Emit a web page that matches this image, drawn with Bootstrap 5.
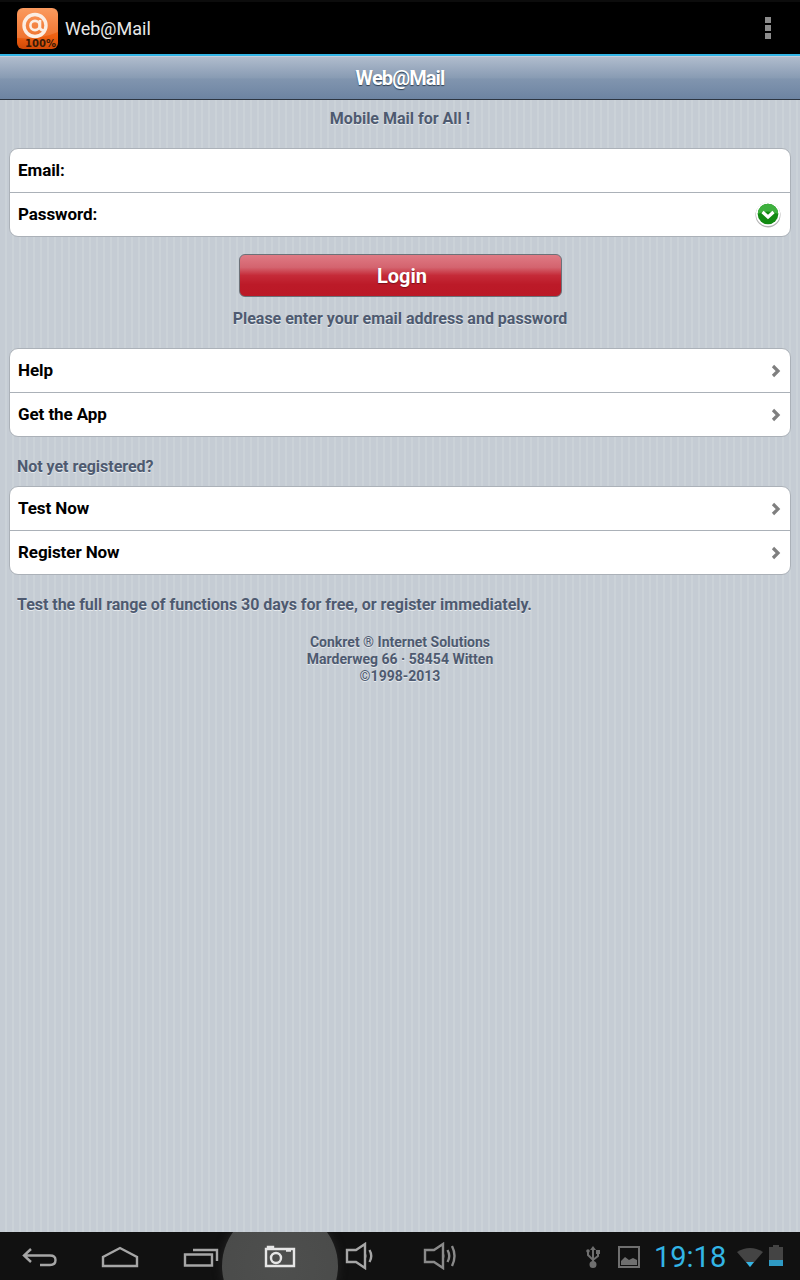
<!DOCTYPE html>
<html lang="en">
<head>
    <meta charset="UTF-8">
    <meta name="viewport" content="width=device-width, initial-scale=1.0">
    <title>Web@Mail</title>
    <link rel="stylesheet" href="https://cdn.jsdelivr.net/npm/bootstrap@5.3.0/dist/css/bootstrap.min.css">
    <style>
        html, body { height: 100%; }
        body { font-family: Roboto, "Liberation Sans", sans-serif; background: #c5ccd4; }
        .screen { height: 1280px; width: 800px; overflow: hidden; }
        .action-bar { height: 56px; background: #000; border-top: 2px solid #0c0c0c; border-bottom: 2px solid #33b5e5; padding: 0 17px; color: #e8e8e8; font-size: 18px; }
        .app-logo { width: 41px; height: 41px; margin-right: 7px; display: block; }
        .overflow-dots { width: 6px; margin-right: 12px; gap: 2px; }
        .overflow-dots span { display: block; width: 6px; height: 6px; background: #8c8c8c; }
        .title-bar { height: 44px; background: linear-gradient(#b0bccd, #889bb3 50%, #8195af 52%, #6d84a2); border-top: 1px solid #c4cedb; border-bottom: 1px solid #2d3642; color: #fff; font-size: 20px; font-weight: 700; letter-spacing: -0.9px; text-shadow: 0 1px 1px #2f3e51; }
        .page-body { height: 1132px; padding: 0 9px; background-color: #c5ccd4; background-image: linear-gradient(90deg, transparent, transparent 71%, #cbd2d8 71%); background-size: 7px 7px; }
        .note { color: #4e5a70; font-weight: 700; font-size: 16px; line-height: 20px; text-shadow: 0 1px 0 #e6eaee; }
        .tagline { padding-top: 9px; height: 48px; }
        .form-group { background: #fff; border: 1px solid #abb1b8; border-radius: 9px; overflow: hidden; }
        .form-row { height: 44px; padding: 0 8px; color: #000; font-weight: 700; font-size: 17px; letter-spacing: -0.08px; border-top: 1px solid #abb1b8; }
        .form-row:first-child { height: 43px; border-top: 0; }
        .row-arrow { margin-right: 1px; }
        .check-icon { margin-right: 1px; }
        .login-btn { display: block; width: 323px; height: 43px; margin: 17px 0 0 230px; padding: 0 0 0 3px; color: #fff; font-size: 20px; font-weight: 700; background: linear-gradient(#df7a84, #d4646f 30%, #c52a38 50%, #bc1a28 72%, #bb1826); border: 1px solid #6c7178; border-radius: 6px; text-shadow: 0 1px 1px #7a1019; }
        .login-hint { margin: 12px 0 19px; }
        .sub-head { padding: 0 8px; margin: 20px 0 9px; letter-spacing: -0.03px; }
        .full-note { padding: 0 8px; margin: 20px 0 19px; letter-spacing: -0.03px; }
        .imprint { font-size: 14px; line-height: 17px; color: #4e5a70; font-weight: 700; text-shadow: 0 1px 0 #e6eaee; }
        .nav-strip { height: 48px; background: #111; position: relative; overflow: hidden; }
        .nav-glow { position: absolute; left: 222px; top: -24px; width: 116px; height: 116px; border-radius: 50%; background: radial-gradient(#4e4f4e, #4a4b4a 80%, #434443); box-shadow: 0 0 10px #262626; }
        .nav-strip svg { position: absolute; fill: none; stroke: #a6a6a6; stroke-width: 2.4; }
        .clock { position: absolute; left: 654px; top: 8px; font-size: 29px; line-height: 34px; color: #33b5e5; }
    </style>
</head>
<body>
    <div class="screen">
        <div class="action-bar d-flex align-items-center justify-content-between">
            <div class="d-flex align-items-center">
                <svg class="app-logo" viewBox="0 0 41 41">
                    <defs>
                        <linearGradient id="logoBg" x1="0" y1="0" x2="0" y2="1">
                            <stop offset="0" stop-color="#fb8a45"/>
                            <stop offset=".7" stop-color="#ee5f10"/>
                            <stop offset="1" stop-color="#cf4a08"/>
                        </linearGradient>
                    </defs>
                    <rect width="41" height="41" rx="6" fill="url(#logoBg)"/>
                    <path d="M0 30 Q22 32 41 24 V6 Q41 0 35 0 H6 Q0 0 0 6 Z" fill="#fff" opacity=".14"/>
                    <circle cx="18" cy="17.5" r="11" fill="none" stroke="#fbeee4" stroke-width="3.4"/>
                    <circle cx="18" cy="17.5" r="4.6" fill="none" stroke="#fbeee4" stroke-width="2.6"/>
                    <path d="M23 12 V20 Q24 23 28 22" fill="none" stroke="#fbeee4" stroke-width="2.6"/>
                    <text x="23.5" y="38.5" text-anchor="middle" font-family="DejaVu Sans" font-size="10" font-weight="700" fill="#3a1a06">100%</text>
                </svg>
                <span>Web@Mail</span>
            </div>
            <div class="overflow-dots d-flex flex-column">
                <span></span><span></span><span></span>
            </div>
        </div>
        <div class="title-bar d-flex align-items-center justify-content-center">Web@Mail</div>
        <div class="page-body">
            <div class="note tagline text-center">Mobile Mail for All !</div>
            <div class="form-group">
                <div class="form-row d-flex align-items-center">Email:</div>
                <div class="form-row d-flex align-items-center justify-content-between">Password:
                    <svg width="26" height="27" viewBox="0 0 26 27" class="check-icon">
                        <circle cx="13" cy="14" r="12.5" fill="#555" opacity=".45"/>
                        <circle cx="13" cy="13" r="12" fill="#fff"/>
                        <circle cx="13" cy="13" r="10.3" fill="#128a12"/>
                        <path d="M2.7 13 A10.3 10.3 0 0 1 23.3 13 Q13 8 2.7 13" fill="#3eb03e"/>
                        <path d="M7.5 11 L13 16 L18.5 11" fill="none" stroke="#fff" stroke-width="3.2"/>
                    </svg>
                </div>
            </div>
            <button type="button" class="btn login-btn">Login</button>
            <div class="note login-hint text-center">Please enter your email address and password</div>
            <div class="form-group">
                <div class="form-row d-flex align-items-center justify-content-between">Help
                    <svg class="row-arrow" width="10" height="14" viewBox="0 0 10 14"><path d="M2 2 L7 7 L2 12" fill="none" stroke="#7f7f7f" stroke-width="3.2"/></svg>
                </div>
                <div class="form-row d-flex align-items-center justify-content-between">Get the App
                    <svg class="row-arrow" width="10" height="14" viewBox="0 0 10 14"><path d="M2 2 L7 7 L2 12" fill="none" stroke="#7f7f7f" stroke-width="3.2"/></svg>
                </div>
            </div>
            <div class="note sub-head">Not yet registered?</div>
            <div class="form-group">
                <div class="form-row d-flex align-items-center justify-content-between">Test Now
                    <svg class="row-arrow" width="10" height="14" viewBox="0 0 10 14"><path d="M2 2 L7 7 L2 12" fill="none" stroke="#7f7f7f" stroke-width="3.2"/></svg>
                </div>
                <div class="form-row d-flex align-items-center justify-content-between">Register Now
                    <svg class="row-arrow" width="10" height="14" viewBox="0 0 10 14"><path d="M2 2 L7 7 L2 12" fill="none" stroke="#7f7f7f" stroke-width="3.2"/></svg>
                </div>
            </div>
            <div class="note full-note">Test the full range of functions 30 days for free, or register immediately.</div>
            <div class="imprint text-center">Conkret ® Internet Solutions<br>Marderweg 66 · 58454 Witten<br>©1998-2013</div>
        </div>
        <div class="nav-strip">
            <div class="nav-glow"></div>
            <svg style="left:22px;top:13px" width="36" height="24" viewBox="0 0 36 24"><path d="M9 4 L2 10.5 L9 17 M2 10.5 H28 Q33.5 10.5 33.5 15 Q33.5 20 28 20 H18"/></svg>
            <svg style="left:100px;top:14px" width="40" height="24" viewBox="0 0 40 24"><path d="M3 20 V11 L20 2 L37 11 V20 Z"/></svg>
            <svg style="left:183px;top:14px" width="36" height="22" viewBox="0 0 36 22"><path d="M2 8.5 H29 V19.5 H2 Z M10 4 H34 V15"/></svg>
            <svg style="left:264px;top:12px;stroke:#e6e6e6" width="32" height="24" viewBox="0 0 32 24"><path d="M2 5 H30 V22 H2 Z M4 4 V3 H9 V4 M22 6.5 H27"/><circle cx="12" cy="14" r="5"/></svg>
            <svg style="left:345px;top:10px" width="30" height="28" viewBox="0 0 30 28"><path d="M2 8 H11 L20 2 V26 L11 20 H2 Z M24.5 8 Q28 14 24.5 20"/><path d="M20 10 Q23 14 20 18 Z" fill="#a6a6a6" stroke="none"/></svg>
            <svg style="left:423px;top:10px;stroke:#8a8a8a" width="34" height="28" viewBox="0 0 34 28"><path d="M2 8 H11 L20 2 V26 L11 20 H2 Z M24.5 8 Q28 14 24.5 20 M29 4 Q34 14 29 24"/><path d="M20 10 Q23 14 20 18 Z" fill="#8a8a8a" stroke="none"/></svg>
            <svg style="left:584px;top:13px;stroke:#6f6f6f;stroke-width:2" width="18" height="24" viewBox="0 0 18 24"><path d="M9 3 V20 M4 7 V10 L9 15 L14 11 V8"/><path d="M9 1 L12 5 H6 Z" fill="#6f6f6f" stroke="none"/><circle cx="9" cy="19.5" r="2.5" fill="#6f6f6f"/><circle cx="4" cy="6" r="1.8" fill="#6f6f6f" stroke="none"/><rect x="12" y="5" width="4" height="4" fill="#6f6f6f" stroke="none"/></svg>
            <svg style="left:618px;top:14px;stroke:#6f6f6f;stroke-width:2" width="22" height="22" viewBox="0 0 22 22"><path d="M1 1 H21 V21 H1 Z"/><path d="M3 19 V15 L7 11 L11 14 L15 12 L19 14 V19 Z" fill="#6f6f6f" stroke="none"/></svg>
            <div class="clock">19:18</div>
            <svg style="left:737px;top:15px;stroke:none" width="26" height="20" viewBox="0 0 26 20"><path d="M0 5 Q13 -3 26 5 L13 20 Z" fill="#444"/><path d="M9 15 H17 L13 20 Z" fill="#33b5e5"/></svg>
            <svg style="left:769px;top:13px;stroke:none" width="14" height="22" viewBox="0 0 14 22"><path d="M4 0 H10 V2 H14 V21 H0 V2 H4 Z" fill="#444"/><rect y="15" width="14" height="6" fill="#2f9ac4"/></svg>
        </div>
    </div>
    <script src="https://cdn.jsdelivr.net/npm/bootstrap@5.3.0/dist/js/bootstrap.bundle.min.js"></script>
</body>
</html>
